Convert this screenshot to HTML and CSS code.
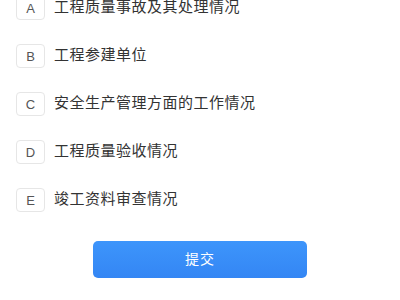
FILE: index.html
```html
<!DOCTYPE html>
<html lang="zh-CN">
<head>
    <meta charset="UTF-8">
    <title>选择题</title>
    <link rel="stylesheet" href="styles.css">
</head>
<body>
<ul class="options">
    <li><span class="tag">A</span><span class="label">工程质量事故及其处理情况</span></li>
    <li><span class="tag">B</span><span class="label">工程参建单位</span></li>
    <li><span class="tag">C</span><span class="label">安全生产管理方面的工作情况</span></li>
    <li><span class="tag">D</span><span class="label">工程质量验收情况</span></li>
    <li><span class="tag">E</span><span class="label">竣工资料审查情况</span></li>
</ul>
<div class="foot">
    <button class="submit">提交</button>
</div>
</body>
</html>
```

FILE: styles.css
```css
body{
    margin: 0;
    background: #fff;
    font-family: "Noto Sans CJK SC", "Noto Sans", sans-serif;
}
.options{
    list-style: none;
    margin: -4px 0 0;
    padding: 0 0 0 16px;
    display: flex;
    flex-direction: column;
    gap: 24px;
}
.options li{
    display: flex;
    align-items: center;
    height: 24px;
}
/*选项字母的小方框*/
.tag{
    box-sizing: border-box;
    width: 29px;
    height: 24px;
    padding-top: 1px;
    border: 1px solid #e6e6e6;
    border-radius: 4px;
    display: flex;
    align-items: center;
    justify-content: center;
    font-family: "Liberation Sans", Arial, sans-serif;
    font-size: 13px;
    color: #555;
    margin-right: 9px;
}
.label{
    font-size: 15px;
    line-height: 20px;
    padding-bottom: 5px;
    color: #333;
    letter-spacing: 0.5px;
}
.foot{
    display: flex;
    justify-content: center;
    padding-top: 29px;
}
.submit{
    width: 214px;
    height: 37px;
    padding: 0 0 3px;
    border: none;
    border-radius: 5px;
    background: linear-gradient(to bottom, #3d95fb, #3486f4);
    color: #fff;
    font-family: "Noto Sans CJK SC", sans-serif;
    font-size: 14px;
    letter-spacing: 1px;
}
```
